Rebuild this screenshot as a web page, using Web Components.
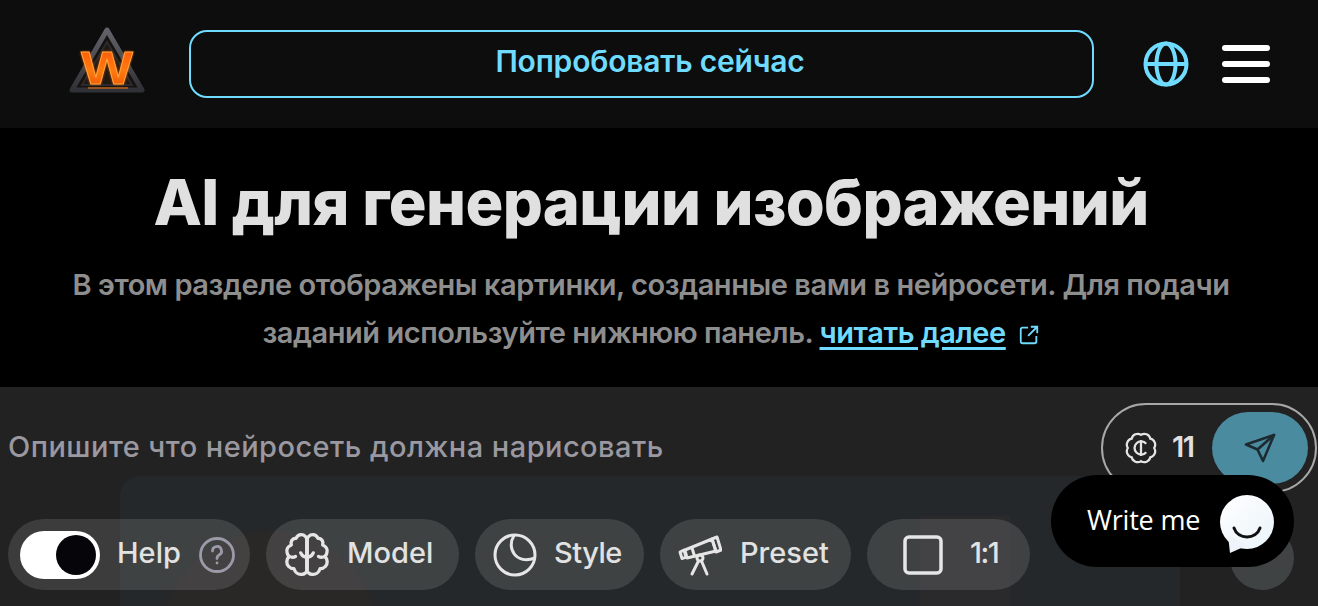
<!DOCTYPE html>
<html lang="ru">
<head>
<meta charset="utf-8">
<title>AI для генерации изображений</title>
<style>
  html, body { margin: 0; height: 606px; overflow: hidden; background: #000; }
  body { font-family: "Inter", "Open Sans", sans-serif; display: flex; flex-direction: column; }
</style>
</head>
<body>
<app-header></app-header>
<hero-intro>
  <span slot="title">AI для генерации изображений</span>
  В этом разделе отображены картинки, созданные вами в нейросети. Для подачи<br>заданий используйте нижнюю панель.
</hero-intro>
<prompt-panel>
  <chip-button style="--w:242px" slot="chips" kind="help">Help</chip-button>
  <chip-button style="--w:193px" slot="chips" kind="model">Model</chip-button>
  <chip-button style="--w:169px" slot="chips" kind="style">Style</chip-button>
  <chip-button style="--w:191px" slot="chips" kind="preset">Preset</chip-button>
  <chip-button style="--w:163px" slot="chips" kind="ratio">1:1</chip-button>
</prompt-panel>
<chat-widget></chat-widget>

<script>
const headerTpl = document.createElement('template')
headerTpl.innerHTML = `
  <style>
    :host { display: flex; align-items: center; height: 128px; background: #0d0d0d; box-sizing: border-box; padding: 0 48px 0 64px; flex: none; }
    .logo { width: 86px; height: 80px; flex: none; margin-top: -4px; }
    .cta { flex: 1; height: 68px; margin: 0 0 0 39px; box-sizing: border-box; border: 2px solid #6fdcff; border-radius: 18px; background: transparent; color: #6fdcff; font: 600 30px/1 "Inter", sans-serif; letter-spacing: -.2px; display: flex; align-items: center; justify-content: center; padding: 0 0 6px 17px; }
    .globe { width: 48px; height: 48px; margin-left: 48px; flex: none; }
    .burger { width: 48px; margin-left: 32px; display: flex; flex-direction: column; gap: 10px; flex: none; }
    .burger i { display: block; height: 6px; background: #fff; border-radius: 3px; }
  </style>
  <svg class="logo" viewBox="0 0 86 80">
    <defs>
      <linearGradient id="rim" x1="0" y1="0" x2="0" y2="1"><stop offset="0" stop-color="#62626a"/><stop offset="1" stop-color="#303136"/></linearGradient>
      <linearGradient id="fire" x1="0" y1="0" x2="0" y2="1"><stop offset="0" stop-color="#ff4f08"/><stop offset=".55" stop-color="#ff7a10"/><stop offset="1" stop-color="#e84a00"/></linearGradient>
      <filter id="glow" x="-30%" y="-30%" width="160%" height="160%"><feGaussianBlur stdDeviation="1.6"/></filter>
    </defs>
    <path d="M43 8 L78 68 H8 Z" fill="#17120f" stroke="url(#rim)" stroke-width="5" stroke-linejoin="round"/>
    <path d="M43 20 L68 63 H18 Z" fill="#231712" stroke="#2a2a2e" stroke-width="2"/>
    <path d="M24 66 H64" stroke="#b8621c" stroke-width="1.5"/>
    <text x="43" y="62" text-anchor="middle" font-family="Liberation Sans" font-weight="700" font-size="46" fill="#ff6a00" filter="url(#glow)" textLength="52" lengthAdjust="spacingAndGlyphs">W</text>
    <text x="43" y="62" text-anchor="middle" font-family="Liberation Sans" font-weight="700" font-size="46" fill="url(#fire)" stroke="#ffa63a" stroke-width=".9" textLength="52" lengthAdjust="spacingAndGlyphs">W</text>
  </svg>
  <div class="cta">Попробовать сейчас</div>
  <svg class="globe" viewBox="0 0 48 48" fill="none" stroke="#6fdcff" stroke-width="4">
    <circle cx="24" cy="24" r="20.5"/>
    <ellipse cx="24" cy="24" rx="9.5" ry="20.5"/>
    <path d="M3.5 24h41"/>
  </svg>
  <div class="burger"><i></i><i></i><i></i></div>
`
class AppHeader extends HTMLElement {
  constructor() {
    super()
    this.attachShadow({ mode: 'open' }).appendChild(headerTpl.content.cloneNode(true))
  }
}
customElements.define('app-header', AppHeader)

const heroTpl = document.createElement('template')
heroTpl.innerHTML = `
  <style>
    :host { display: block; height: 259px; background: #000; box-sizing: border-box; padding: 38px 16px 0 0; text-align: center; flex: none; }
    h1 { margin: 0; font: 800 63px/72px "Inter", sans-serif; letter-spacing: -.6px; color: #e0e0e0; }
    p { margin: 23px auto 0; width: 1180px; font: 600 29px/48px "Inter", sans-serif; letter-spacing: -.45px; color: #8e8e8e; }
    a { color: #6fdcff; text-decoration: underline; text-decoration-thickness: 2.5px; text-underline-offset: 4px; }
    svg { width: 22px; height: 22px; vertical-align: -3px; margin-left: 5px; }
  </style>
  <h1><slot name="title"></slot></h1>
  <p><slot></slot> <a>читать далее</a> <svg viewBox="0 0 24 24" fill="none" stroke="#6fdcff" stroke-width="2">
      <path d="M11 4H5a2 2 0 0 0-2 2v13a2 2 0 0 0 2 2h13a2 2 0 0 0 2-2v-6M14 3h7v7M21 3 11 13"/>
    </svg></p>
`
class HeroIntro extends HTMLElement {
  constructor() {
    super()
    this.attachShadow({ mode: 'open' }).appendChild(heroTpl.content.cloneNode(true))
  }
}
customElements.define('hero-intro', HeroIntro)

const panelTpl = document.createElement('template')
panelTpl.innerHTML = `
  <style>
    :host { display: flex; flex-direction: column; flex: 1; background: #222222; position: relative; overflow: hidden; }
    .backdrop { position: absolute; left: 120px; top: 89px; width: 1060px; height: 140px; background: #24282a; border-radius: 20px 0 0 0; }
    .backdrop i { position: absolute; display: block; }
    .b1 { left: 40px; top: 55px; width: 220px; height: 220px; border-radius: 50%; background: #2a2727; }
    .b2 { left: 800px; top: 40px; width: 90px; height: 90px; background: #2a2a2c; }
    .row { position: relative; display: flex; align-items: center; height: 132px; padding-left: 8px; flex: none; box-sizing: border-box; padding-top: 6px; }
    .prompt { flex: 1; font: 500 29px/1 "Inter", sans-serif; letter-spacing: .45px; color: #9a98a0; margin-bottom: 20px; }
    .send { width: 216px; height: 90px; box-sizing: border-box; border: 2px solid #a8a8a8; border-radius: 45px; display: flex; align-items: center; padding-left: 22px; margin: 0 1px 16px 0; flex: none; }
    .coin { width: 32px; height: 32px; flex: none; }
    .num { font: 600 29px/1 "Inter", sans-serif; letter-spacing: -1.5px; color: #e0e0e0; margin: 0 0 4px 15px; width: 30px; }
    .go { width: 96px; height: 72px; border-radius: 36px; background: #4a8ba0; display: flex; align-items: center; justify-content: center; margin-left: 10px; }
    .go svg { width: 32px; height: 32px; }
    .chips { position: relative; display: flex; gap: 16px; padding-left: 8px; align-items: center; }
    .more { position: absolute; left: 1230px; top: 139px; width: 64px; height: 64px; border-radius: 50%; background: #3f4343; }
  </style>
  <div class="backdrop"><i class="b1"></i><i class="b2"></i></div>
  <div class="row">
    <div class="prompt">Опишите что нейросеть должна нарисовать</div>
    <div class="send">
      <svg class="coin" viewBox="0 0 34 34" fill="none" stroke="#e4e4e4" stroke-width="2.4">
        <path d="M17 3A6.500 6.500 0 0 1 26.900 7.100A6.500 6.500 0 0 1 31 17A6.500 6.500 0 0 1 26.900 26.900A6.500 6.500 0 0 1 17 31A6.500 6.500 0 0 1 7.100 26.900A6.500 6.500 0 0 1 3 17A6.500 6.500 0 0 1 7.100 7.100A6.500 6.500 0 0 1 17 3z"/>
        <path d="M22.500 12.500a7 7 0 1 0 0 9M17 8.500v17"/>
      </svg>
      <span class="num">11</span>
      <div class="go">
        <svg viewBox="0 0 32 32" fill="none" stroke="#1d2a30" stroke-width="2.6" stroke-linejoin="round" stroke-linecap="round">
          <path d="M30 3 2 12.500l11.500 5L19 29z"/>
          <path d="M13.500 17.500 30 3"/>
        </svg>
      </div>
    </div>
  </div>
  <div class="chips"><slot name="chips"></slot></div>
  <div class="more"></div>
`
class PromptPanel extends HTMLElement {
  constructor() {
    super()
    this.attachShadow({ mode: 'open' }).appendChild(panelTpl.content.cloneNode(true))
  }
}
customElements.define('prompt-panel', PromptPanel)

const chipIcons = {
  help: `<span class="toggle"><i></i></span>`,
  model: `<svg class="ic" width="46" height="46" viewBox="0 0 44 44" fill="none" stroke="#e6e6e6" stroke-width="3.200" stroke-linecap="round" stroke-linejoin="round">
    <path d="M22 8c0-3-2.500-5.500-5.500-5.500-2 0-4 1-5 3.500-3.500 0-5.500 3-4.500 6.500C3.500 14 2 17 3 20c.3 1.500 1 2.500 2 3.500-3 2.500-3 7-.5 9.500 1.300 1.500 3 2 5 2 1 3.500 4 6 7.500 5.500 2.500 0 5-2 5-5z"/>
    <path d="M22 8c0-3 2.500-5.500 5.500-5.500 2 0 4 1 5 3.500 3.500 0 5.500 3 4.500 6.500 3.500 1.500 5 4.500 4 7.500-.3 1.500-1 2.500-2 3.500 3 2.500 3 7 .5 9.500-1.300 1.500-3 2-5 2-1 3.500-4 6-7.500 5.500-2.500 0-5-2-5-5z"/>
    <path d="M22 8v27M22 24c-2.500 0-5-1.500-6-4M22 24c2.500 0 5-1.500 6-4M5 23.500c2.500 1 4 1 6 0M39 23.500c-2.500 1-4 1-6 0"/>
  </svg>`,
  style: `<svg class="ic" width="44" height="44" viewBox="0 0 44 44" fill="none" stroke="#e6e6e6" stroke-width="3">
    <circle cx="22" cy="22" r="20"/>
    <path d="M21 2.500C13 15 23 32 42 25"/>
  </svg>`,
  preset: `<svg class="ic" width="44" height="44" viewBox="0 0 44 44" fill="none" stroke="#e6e6e6" stroke-width="3" stroke-linecap="round" stroke-linejoin="round">
    <path d="M2 19l4-2 2 7-4 1.500zM7 17l27-11 4 12-29 7z"/>
    <path d="M34 6l5-2 4 13-5 2zM14 15l2.500 8"/>
    <circle cx="22" cy="25" r="3"/>
    <path d="M20.500 28 14 41M23.500 28 29 41"/>
  </svg>`,
  ratio: `<svg class="ic" width="40" height="40" viewBox="0 0 40 40" fill="none" stroke="#e6e6e6" stroke-width="3.500">
    <rect x="2" y="2" width="36" height="36" rx="4"/>
  </svg>`
}

const chipTpl = document.createElement('template')
chipTpl.innerHTML = `
  <style>
    :host { display: flex; align-items: center; width: var(--w); height: 71px; box-sizing: border-box; padding-left: 18px; border-radius: 36px; background: rgba(255,255,255,.12); color: #e2e2e2; font: 500 29px/1 "Inter", sans-serif; letter-spacing: 0; flex: none; }
    .slot { display: flex; align-items: center; }
    .label { margin-left: 18px; padding-bottom: 4px; }
    :host([kind="help"]) { padding-left: 12px; }
    :host([kind="help"]) .label { margin-left: 17px; }
    :host([kind="model"]) .label { margin-left: 17px; }
    :host([kind="style"]) .label { letter-spacing: -.5px; margin-left: 17px; }
    :host([kind="ratio"]) { padding-left: 36px; }
    :host([kind="ratio"]) .label { margin-left: 27px; letter-spacing: -1.5px; }
    .toggle { display: block; width: 80px; height: 48px; border-radius: 24px; background: #fff; position: relative; }
    .toggle i { position: absolute; right: 4px; top: 4px; width: 40px; height: 40px; border-radius: 50%; background: #06060a; }
    .q { width: 36px; height: 36px; margin-left: 18px; }
  </style>
  <span class="slot"></span><span class="label"><slot></slot></span>
`
class ChipButton extends HTMLElement {
  constructor() {
    super()
    this.attachShadow({ mode: 'open' }).appendChild(chipTpl.content.cloneNode(true))
  }

  connectedCallback() {
    const kind = this.getAttribute('kind')
    this.shadowRoot.querySelector('.slot').innerHTML = chipIcons[kind] || ''
    if (kind === 'help') {
      this.shadowRoot.querySelector('.label').insertAdjacentHTML('afterend', `<svg class="q" viewBox="0 0 36 36" fill="none" stroke="#9c9aa8" stroke-width="2.800" stroke-linecap="round">
        <circle cx="18" cy="18" r="16.500"/>
        <path d="M13.500 14a4.500 4.500 0 1 1 6.500 4c-1.500 1-2 2-2 3.500"/>
        <path d="M18 26v.1"/>
      </svg>`)
    }
  }
}
customElements.define('chip-button', ChipButton)

const chatTpl = document.createElement('template')
chatTpl.innerHTML = `
  <style>
    :host { position: absolute; left: 1051px; top: 475px; width: 243px; height: 92px; border-radius: 46px; background: #000; color: #fff; display: flex; align-items: center; box-sizing: border-box; padding-left: 36px; font: 400 27px/1 "Open Sans", sans-serif; letter-spacing: -.2px; }
    span { flex: 1; padding-bottom: 4px; }
    svg { width: 54px; height: 60px; margin-right: 20px; margin-top: 8px; flex: none; }
  </style>
  <span>Write me</span>
  <svg viewBox="0 0 54 60">
    <defs><linearGradient id="bub" x1="0" y1="0" x2="1" y2="1"><stop offset="0" stop-color="#ffffff"/><stop offset="1" stop-color="#eaf3fb"/></linearGradient></defs>
    <circle cx="27" cy="27" r="27" fill="url(#bub)"/>
    <path d="M8 40 L10 58 L28 50Z" fill="#eef4fa"/>
    <path d="M14 33c4 12 22 12 26 0" fill="none" stroke="#111" stroke-width="3" stroke-linecap="round"/>
  </svg>
`
class ChatWidget extends HTMLElement {
  constructor() {
    super()
    this.attachShadow({ mode: 'open' }).appendChild(chatTpl.content.cloneNode(true))
  }
}
customElements.define('chat-widget', ChatWidget)
</script>
</body>
</html>
